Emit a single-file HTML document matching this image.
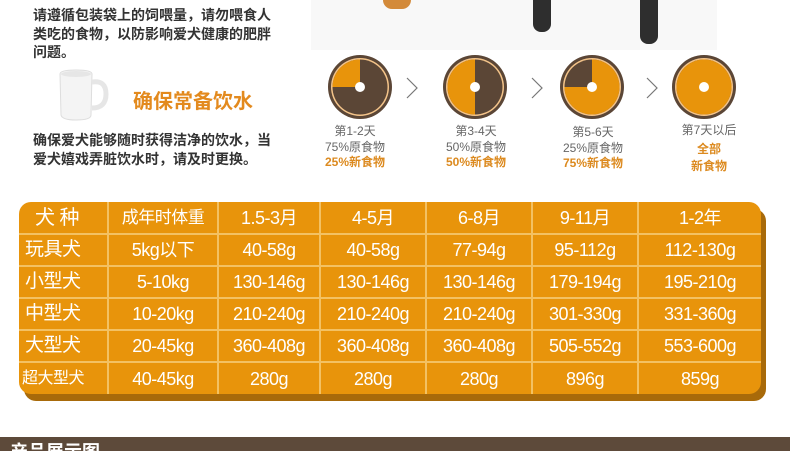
<!DOCTYPE html>
<html><head><meta charset="utf-8"><style>
*{margin:0;padding:0;box-sizing:border-box}
body{width:790px;height:451px;overflow:hidden;background:#fff;font-family:"Liberation Sans","Noto Sans CJK SC",sans-serif;position:relative}
.a{position:absolute;white-space:nowrap}
.p{font-size:14px;color:#333;line-height:18.5px;font-weight:bold;left:33px}
.lab{font-size:12px;text-align:center;line-height:15.5px;width:100px}
.g{color:#666}.o{color:#dc8a1f;font-weight:bold}
table{position:absolute;left:19px;top:202px;width:742px;height:192px;border-collapse:collapse;background:#e8940b;border-radius:12px;box-shadow:5px 7px 0 #a86a0a;}
td{border:2px solid #f3c163;color:#fff;font-size:18px;letter-spacing:-0.5px;text-align:center;padding:0;height:32px;line-height:20px}
tr:first-child td{border-top:none}tr:last-child td{border-bottom:none}
td:first-child{border-left:none;text-align:left;padding-left:6px;font-size:19px}td:last-child{border-right:none}
</style></head><body>
<div class="a p" style="top:6px">请遵循包装袋上的饲喂量，请勿喂食人<br>类吃的食物，以防影响爱犬健康的肥胖<br>问题。</div>
<svg class="a" style="left:56px;top:68px" width="60" height="54"><path d="M4 6 Q4 2 20 2 Q36 2 36 6 L35 47 Q35 52 20 52 Q6 52 5 47 Z" fill="#f4f4f4" stroke="#ddd"/><ellipse cx="20" cy="6" rx="15" ry="3" fill="#e6e6e6"/><path d="M36 14 Q50 12 50 26 Q50 40 36 40" fill="none" stroke="#e6e6e6" stroke-width="5"/></svg>
<div class="a" style="left:133px;top:85px;font-size:20px;color:#e38a1e;font-weight:bold">确保常备饮水</div>
<div class="a p" style="top:131px">确保爱犬能够随时获得洁净的饮水，当<br>爱犬嬉戏弄脏饮水时，请及时更换。</div>
<div class="a" style="left:311px;top:0;width:406px;height:50px;background:#f8f8f8"></div>
<div class="a" style="left:383px;top:0;width:28px;height:9px;background:#d38a3a;border-radius:0 0 14px 14px"></div>
<div class="a" style="left:533px;top:0;width:18px;height:32px;background:#2e2e2e;border-radius:0 0 8px 8px"></div>
<div class="a" style="left:640px;top:0;width:18px;height:44px;background:#2e2e2e;border-radius:0 0 8px 8px"></div>
<svg class="a" style="left:0;top:0" width="790" height="130">
<defs><g id="c"><circle r="32" fill="#5b4636"/><circle r="29" fill="#f4c48a"/><circle r="27.5" fill="#5b4636"/></g></defs>
<g transform="translate(360,87)"><use href="#c"/><path d="M0 0 L0 -27.5 A27.5 27.5 0 0 0 -27.5 0Z" fill="#e8940b"/><circle r="5" fill="#fff"/></g>
<g transform="translate(475,87)"><use href="#c"/><path d="M0 -27.5 A27.5 27.5 0 0 0 0 27.5Z" fill="#e8940b"/><circle r="5" fill="#fff"/></g>
<g transform="translate(592,87)"><use href="#c"/><path d="M0 0 L0 -27.5 A27.5 27.5 0 1 1 -27.5 0Z" fill="#e8940b"/><circle r="5" fill="#fff"/></g>
<g transform="translate(704,87)"><use href="#c"/><circle r="27.5" fill="#e8940b"/><circle r="5" fill="#fff"/></g>
<g fill="none" stroke="#777" stroke-width="1.2"><path d="M407 78 L417 88 L407 98"/><path d="M532 78 L542 88 L532 98"/><path d="M647 78 L657 88 L647 98"/></g>
</svg>
<div class="a lab" style="left:305px;top:124px"><span class="g">第1-2天</span><br><span class="g">75%原食物</span><br><span class="o">25%新食物</span></div>
<div class="a lab" style="left:426px;top:124px"><span class="g">第3-4天</span><br><span class="g">50%原食物</span><br><span class="o">50%新食物</span></div>
<div class="a lab" style="left:543px;top:125px"><span class="g">第5-6天</span><br><span class="g">25%原食物</span><br><span class="o">75%新食物</span></div>
<div class="a lab" style="left:659px;top:123px"><span class="g">第7天以后</span><br><span class="o" style="line-height:20px">全部</span><br><span class="o">新食物</span></div>
<table>
<colgroup><col style="width:89px"><col style="width:110px"><col style="width:102px"><col style="width:106px"><col style="width:106px"><col style="width:106px"><col></colgroup>
<tr><td style="padding-left:16px;font-size:20px">犬 种</td><td style="font-size:17px">成年时体重</td><td>1.5-3月</td><td>4-5月</td><td>6-8月</td><td>9-11月</td><td>1-2年</td></tr>
<tr><td>玩具犬</td><td>5kg以下</td><td>40-58g</td><td>40-58g</td><td>77-94g</td><td>95-112g</td><td>112-130g</td></tr>
<tr><td>小型犬</td><td>5-10kg</td><td>130-146g</td><td>130-146g</td><td>130-146g</td><td>179-194g</td><td>195-210g</td></tr>
<tr><td>中型犬</td><td>10-20kg</td><td>210-240g</td><td>210-240g</td><td>210-240g</td><td>301-330g</td><td>331-360g</td></tr>
<tr><td>大型犬</td><td>20-45kg</td><td>360-408g</td><td>360-408g</td><td>360-408g</td><td>505-552g</td><td>553-600g</td></tr>
<tr><td style="font-size:16px;padding-left:3px">超大型犬</td><td>40-45kg</td><td>280g</td><td>280g</td><td>280g</td><td>896g</td><td>859g</td></tr>
</table>
<div class="a" style="left:0;top:437px;width:790px;height:14px;background:#5d4a3a;overflow:hidden"><div style="position:absolute;left:10px;top:1px;color:#fff;font-weight:bold;font-size:18px">产品展示图</div></div>
</body></html>
